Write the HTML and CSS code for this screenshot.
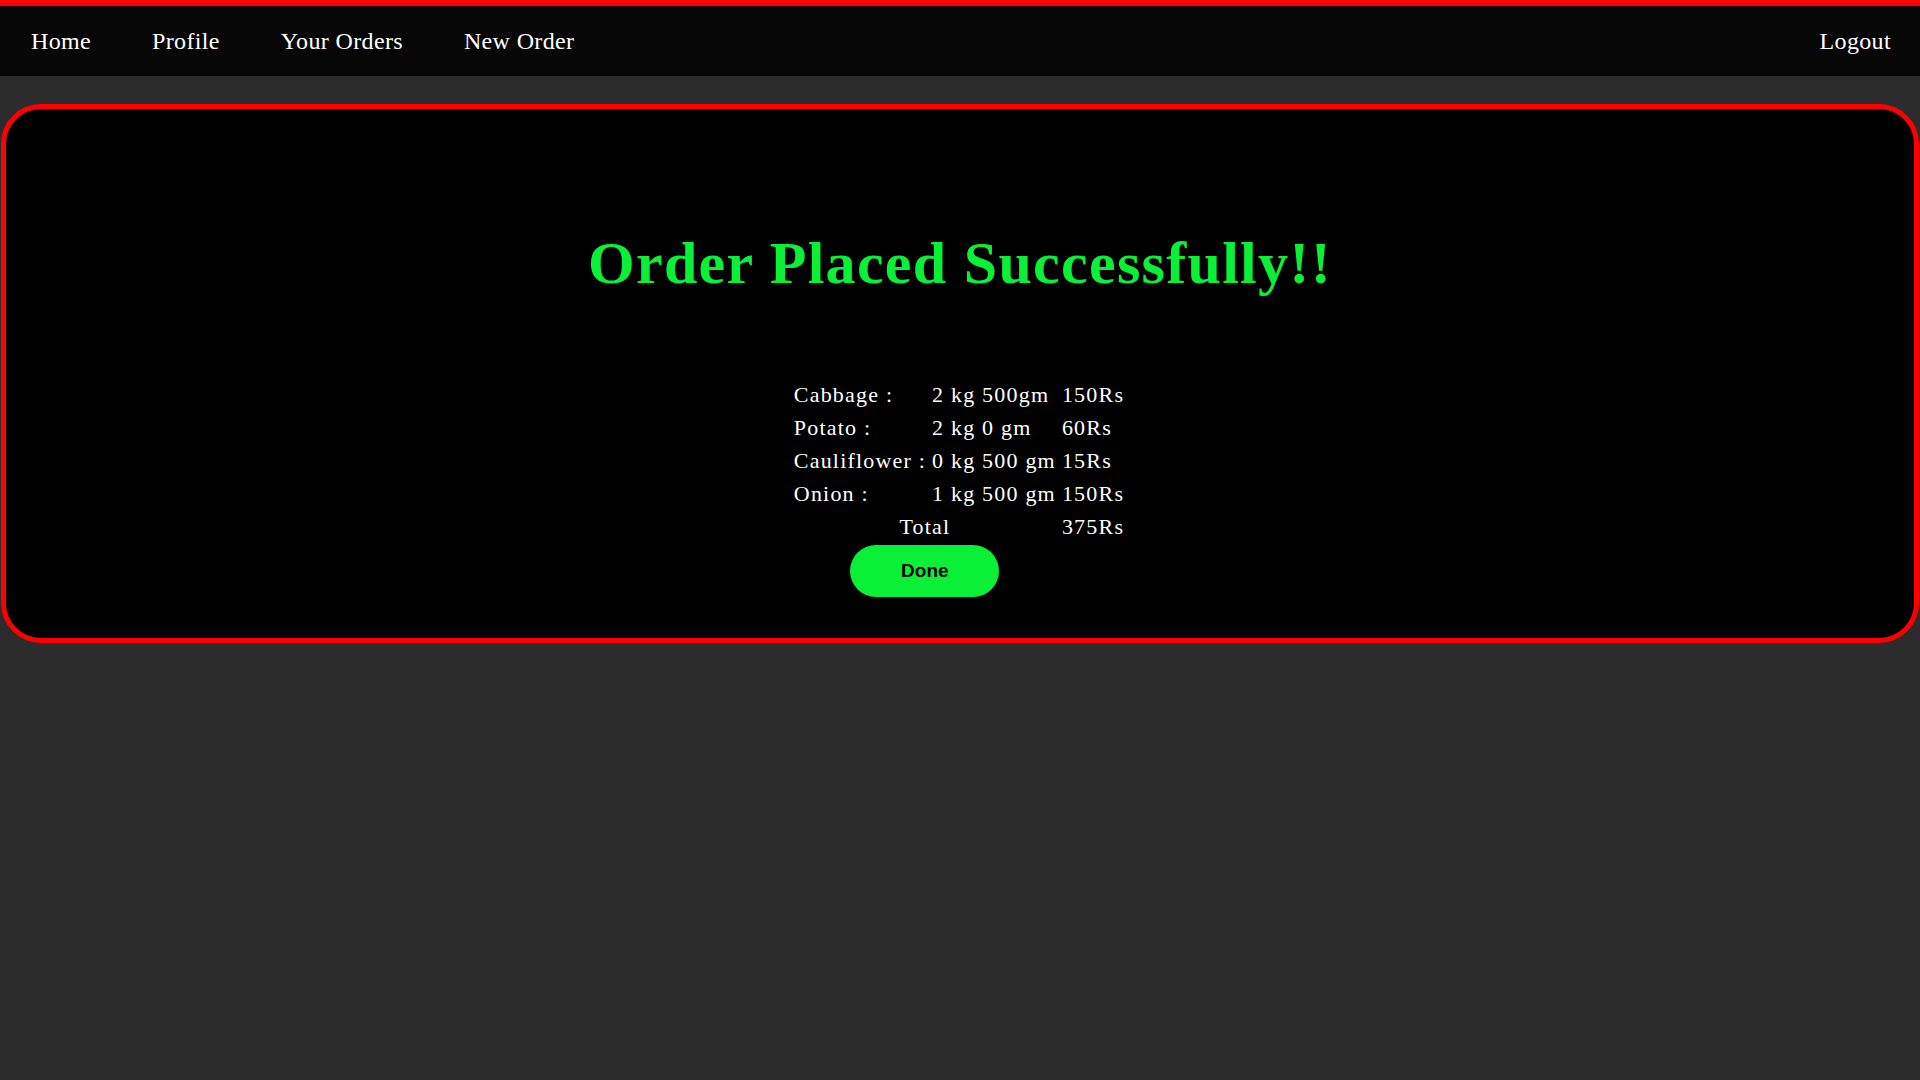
FILE: index.html
```html
<!DOCTYPE html>
<html lang="en">
<head>
<meta charset="utf-8">
<title>Order Placed</title>
<link rel="stylesheet" href="styles.css">
</head>
<body>
<nav class="topnav">
  <div class="nav-left">
    <a class="nav-link" href="#">Home</a>
    <a class="nav-link" href="#">Profile</a>
    <a class="nav-link" href="#">Your Orders</a>
    <a class="nav-link" href="#">New Order</a>
  </div>
  <a class="nav-link" href="#">Logout</a>
</nav>
<main class="card">
  <h1 class="title">Order Placed Successfully!!</h1>
  <table class="order">
    <tr><td>Cabbage :</td><td>2 kg 500gm</td><td>150Rs</td></tr>
    <tr><td>Potato :</td><td>2 kg 0 gm</td><td>60Rs</td></tr>
    <tr><td>Cauliflower :</td><td>0 kg 500 gm</td><td>15Rs</td></tr>
    <tr><td>Onion :</td><td>1 kg 500 gm</td><td>150Rs</td></tr>
    <tr><td colspan="2" class="center">Total</td><td>375Rs</td></tr>
    <tr><td colspan="2" class="center"><button class="done">Done</button></td><td></td></tr>
  </table>
</main>
</body>
</html>
```
FILE: styles.css
```css
html, body {
  margin: 0;
  padding: 0;
}
body {
  background: #2c2c2c;
  font-family: "Liberation Serif", "DejaVu Serif", serif;
  color: #ffffff;
  min-height: 1080px;
}
.topnav {
  border-top: 6px solid #ff0000;
  background: #070707;
  height: 70px;
  display: flex;
  align-items: center;
  justify-content: space-between;
}
.nav-left {
  display: flex;
  align-items: center;
}
.nav-link {
  color: #ffffff;
  text-decoration: none;
  font-size: 24px;
  letter-spacing: 0.35px;
  padding: 0 30px 0 31px;
}
.nav-link:last-child {
  padding-right: 29px;
}
.card {
  margin: 28px 1px 0 1px;
  border: 5px solid #ff0000;
  border-radius: 40px;
  background: #000000;
  padding: 121px 0 38px 0;
}
.title {
  margin: 0 0 80px 0;
  text-align: center;
  font-size: 60px;
  letter-spacing: 1.3px;
  font-weight: bold;
  color: #0af036;
  line-height: 66.7px;
}
.order {
  margin: 0 auto;
  border-spacing: 2px;
  font-size: 22px;
  letter-spacing: 1.2px;
  line-height: 29px;
}
.order td {
  padding: 1px 3px 1px 1px;
  white-space: nowrap;
}
.order td.center {
  text-align: center;
}
.done {
  width: 149px;
  height: 52px;
  border: none;
  border-radius: 26px;
  background: #0af036;
  color: #000000;
  font-family: "Liberation Sans", Arial, sans-serif;
  font-weight: bold;
  font-size: 19px;
  letter-spacing: 0;
  display: block;
  margin: 0 auto;
}
```
